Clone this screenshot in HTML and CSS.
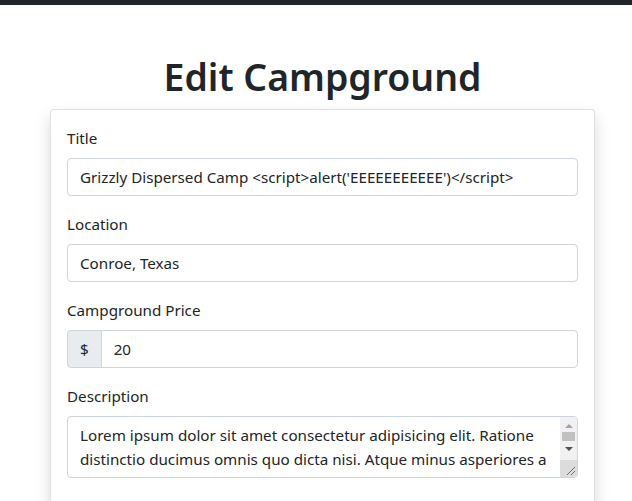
FILE: index.html
```html
<!DOCTYPE html>
<html lang="en">
<head>
<meta charset="utf-8">
<title>Edit Campground</title>
<link rel="stylesheet" href="styles.css">
</head>
<body>
<nav class="topbar"></nav>
<main class="page">
  <h1 class="page-title">Edit Campground</h1>
  <form class="card">
    <div class="field">
      <label class="label" for="title">Title</label>
      <input class="control" id="title" type="text" value="Grizzly Dispersed Camp <script>alert('EEEEEEEEEEE')</script>">
    </div>
    <div class="field">
      <label class="label" for="location">Location</label>
      <input class="control" id="location" type="text" value="Conroe, Texas">
    </div>
    <div class="field">
      <label class="label" for="price">Campground Price</label>
      <div class="input-group">
        <span class="addon">$</span>
        <input class="control group-control" id="price" type="text" value="20">
      </div>
    </div>
    <div class="field">
      <label class="label" for="description">Description</label>
      <div class="textarea-wrap">
        <textarea class="control textarea" id="description" rows="2">Lorem ipsum dolor sit amet consectetur adipisicing elit. Ratione distinctio ducimus omnis quo dicta nisi. Atque minus asperiores a laboriosam, voluptatum quibusdam doloremque repellendus excepturi quae, harum nesciunt unde molestias.</textarea>
        <div class="scrollbar" aria-hidden="true">
          <span class="arrow arrow-up"></span>
          <span class="thumb"></span>
          <span class="arrow arrow-down"></span>
          <span class="resizer">
            <svg width="17" height="17" viewBox="0 0 17 17"><path d="M15 7 L7 15 M15 11 L11 15" stroke="#6f6f6f" stroke-width="1" fill="none"/></svg>
          </span>
        </div>
      </div>
    </div>
    <div class="field">
      <label class="label" for="image">Image Url</label>
      <input class="control" id="image" type="text" value="https://source.unsplash.com/collection/483251">
    </div>
  </form>
</main>
</body>
</html>
```
FILE: styles.css
```css
html, body {
  margin: 0;
  padding: 0;
  background: #fff;
  color: #212529;
  font-family: "Noto Sans", "Open Sans", sans-serif;
  font-size: 15.2px;
  line-height: 24px;
  overflow: hidden;
}
.topbar {
  height: 5px;
  background: #212529;
}
.page {
  width: 545px;
  margin-left: 50px;
  padding-top: 48px;
}
.page-title {
  margin: 0 0 8px;
  font-size: 37.4px;
  line-height: 48px;
  font-weight: 600;
  text-align: center;
}
.card {
  display: flex;
  flex-direction: column;
  gap: 16px;
  padding: 16px;
  border: 1px solid rgba(0,0,0,.125);
  border-radius: 4px;
  box-shadow: 0 8px 16px rgba(0,0,0,.15);
  background: #fff;
}
.field {
  display: flex;
  flex-direction: column;
}
.label {
  margin-bottom: 8px;
  line-height: 24px;
}
.control {
  box-sizing: border-box;
  width: 100%;
  height: 38px;
  padding: 6px 12px;
  border: 1px solid #ced4da;
  border-radius: 4px;
  font: inherit;
  color: #212529;
  background: #fff;
  line-height: 24px;
}
.input-group {
  display: flex;
}
.addon {
  display: flex;
  align-items: center;
  padding: 0 12px;
  height: 38px;
  box-sizing: border-box;
  background: #e9ecef;
  border: 1px solid #ced4da;
  border-radius: 4px 0 0 4px;
}
.group-control {
  flex: 1;
  margin-left: -1px;
  border-radius: 0 4px 4px 0;
}
.textarea-wrap {
  position: relative;
}
.textarea {
  display: block;
  height: 62px;
  padding-right: 30px;
  resize: none;
  overflow: hidden;
}
.scrollbar {
  position: absolute;
  top: 1px;
  right: 1px;
  bottom: 1px;
  width: 17px;
  background: #f1f1f1;
  border-radius: 0 3px 3px 0;
  display: flex;
  flex-direction: column;
  align-items: center;
  overflow: hidden;
}
.arrow {
  width: 0;
  height: 0;
  border-left: 4px solid transparent;
  border-right: 4px solid transparent;
}
.arrow-up {
  margin-top: 7px;
  border-bottom: 4px solid #a3a3a3;
}
.thumb {
  margin-top: 4px;
  width: 13px;
  height: 9px;
  background: #c1c1c1;
}
.arrow-down {
  margin-top: 6px;
  border-top: 4px solid #505050;
}
.resizer {
  margin-top: auto;
  width: 17px;
  height: 17px;
  background: #dcdcdc;
  display: block;
}
.resizer svg {
  display: block;
}
```
